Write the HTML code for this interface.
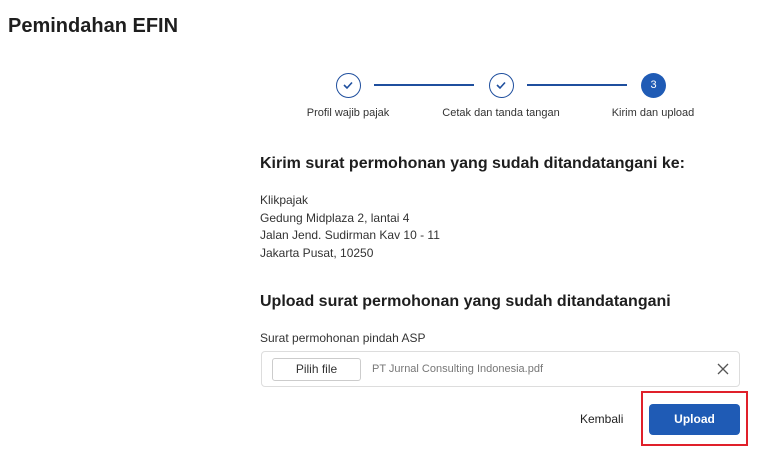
<!DOCTYPE html>
<html><head><style>
body{margin:0;width:764px;height:456px;background:#fff;font-family:"Liberation Sans",sans-serif;color:#222;position:relative;overflow:hidden}
.a{position:absolute;white-space:nowrap}
.c{position:absolute;width:25px;height:25px;border:1.5px solid #1f4f9e;border-radius:50%;box-sizing:border-box}
.ln{position:absolute;height:2px;background:#1f4f9e;top:84px}
.lb{position:absolute;font-size:11px;color:#333;transform:translateX(-50%);top:107px}
</style></head><body>
<div class="a" style="left:8px;top:15px;font-size:20px;font-weight:bold;color:#1e1e1e">Pemindahan EFIN</div>

<div class="c" style="left:336px;top:73px"><svg width="22" height="22" viewBox="0 0 22 22"><path d="M7 11l3 3 5-5.5" fill="none" stroke="#1f4f9e" stroke-width="1.6"/></svg></div>
<div class="ln" style="left:374px;width:100px"></div>
<div class="c" style="left:489px;top:73px"><svg width="22" height="22" viewBox="0 0 22 22"><path d="M7 11l3 3 5-5.5" fill="none" stroke="#1f4f9e" stroke-width="1.6"/></svg></div>
<div class="ln" style="left:527px;width:100px"></div>
<div class="c" style="left:641px;top:73px;width:25px;height:25px;background:#1f5bb5;border:none;color:#fff;font-size:11px;text-align:center;line-height:25px">3</div>
<div class="lb" style="left:348px">Profil wajib pajak</div>
<div class="lb" style="left:501px">Cetak dan tanda tangan</div>
<div class="lb" style="left:653px">Kirim dan upload</div>

<div class="a" style="left:260px;top:155px;font-size:16px;font-weight:bold;color:#1e1e1e">Kirim surat permohonan yang sudah ditandatangani ke:</div>
<div class="a" style="left:260px;top:192px;font-size:12px;line-height:17.5px;color:#333">Klikpajak<br>Gedung Midplaza 2, lantai 4<br>Jalan Jend. Sudirman Kav 10 - 11<br>Jakarta Pusat, 10250</div>
<div class="a" style="left:260px;top:293px;font-size:16px;font-weight:bold;color:#1e1e1e">Upload surat permohonan yang sudah ditandatangani</div>
<div class="a" style="left:260px;top:331px;font-size:12px;color:#333">Surat permohonan pindah ASP</div>

<div class="a" style="left:261px;top:351px;width:479px;height:36px;border:1px solid #ddd;border-radius:4px;box-sizing:border-box"></div>
<div class="a" style="left:272px;top:358px;width:89px;height:23px;border:1px solid #ccc;border-radius:3px;box-sizing:border-box;font-size:12px;text-align:center;line-height:21px;color:#333">Pilih file</div>
<div class="a" style="left:372px;top:363px;font-size:11px;color:#777">PT Jurnal Consulting Indonesia.pdf</div>
<svg class="a" style="left:717px;top:363px" width="12" height="12" viewBox="0 0 12 12"><path d="M1 1l10 10M11 1L1 11" stroke="#555" stroke-width="1.3"/></svg>

<div class="a" style="left:580px;top:412px;font-size:12px;color:#222">Kembali</div>
<div class="a" style="left:641px;top:391px;width:107px;height:55px;border:2px solid #e0202a;box-sizing:border-box"></div>
<div class="a" style="left:649px;top:404px;width:91px;height:31px;background:#1f5bb5;border-radius:4px;color:#fff;font-size:12px;font-weight:bold;text-align:center;line-height:31px">Upload</div>
</body></html>
